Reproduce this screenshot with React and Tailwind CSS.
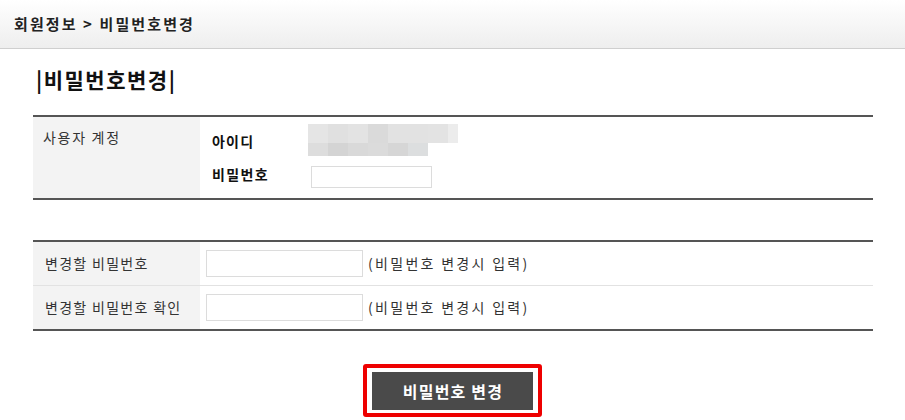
export default function App() {
  const font = { fontFamily: '"Noto Sans CJK KR", "Noto Sans", sans-serif' };
  const top = ["#e5e5e5", "#e0e0e0", "#e3e3e3", "#dadada", "#e2e2e2", "#e2e2e2", "#e3e3e3", "#ececec"];
  const bot = ["#dddddd", "#d4d4d4", "#d9d9d9", "#dbdbdb", "#d6d6d6", "#dcdedf"];
  return (
    <div className="w-[905px] h-[420px] bg-white text-[#222] overflow-hidden" style={font}>
      <div className="h-[49px] border-b border-[#cfcfcf] bg-gradient-to-b from-white to-[#eeeeee] flex items-center pl-[14px]">
        <span className="text-[15px] font-bold text-[#222] tracking-[2.1px]">회원정보 &gt; 비밀번호변경</span>
      </div>
      <div className="ml-[33px] w-[840px]">
        <div className="h-[66px] flex items-center pl-[3px] pb-[5px]">
          <h1 className="text-[21px] font-bold text-[#111] leading-none tracking-[1.5px]">|비밀번호변경|</h1>
        </div>
        <div className="border-t-2 border-b-2 border-[#555] flex h-[85px]">
          <div className="w-[167px] bg-[#f3f3f3] pl-[10px] pt-[10px] text-[14px] text-[#333] tracking-[1.7px]">사용자 계정</div>
          <div className="flex-1 relative">
            <div className="absolute left-[12px] top-[14px] text-[14px] font-bold text-[#111] tracking-[1.2px]">아이디</div>
            <div className="absolute left-[108px] top-[7px] flex flex-col">
              <div className="flex h-[19px]">
                {top.map((c, i) => (
                  <div key={i} className={i === 7 ? "w-[10px]" : "w-[20px]"} style={{ background: c }} />
                ))}
              </div>
              <div className="flex h-[13px]">
                {bot.map((c, i) => (
                  <div key={i} className="w-[20px]" style={{ background: c }} />
                ))}
              </div>
            </div>
            <div className="absolute left-[12px] top-[47px] text-[14px] font-bold text-[#111] tracking-[1.4px]">비밀번호</div>
            <div className="absolute left-[111px] top-[49px] w-[121px] h-[22px] border border-[#dcdcdc] bg-white" />
          </div>
        </div>
        <div className="h-[40px]" />
        <div className="border-t-2 border-b-2 border-[#555]">
          {["변경할 비밀번호", "변경할 비밀번호 확인"].map((label, i) => (
            <div key={i} className={i === 0 ? "flex h-[44px] border-b border-[#e2e2e2]" : "flex h-[43px]"}>
              <div className="w-[167px] bg-[#f3f3f3] pl-[12px] flex items-center text-[14px] text-[#333] tracking-[1.3px]">{label}</div>
              <div className="flex-1 flex items-center pl-[6px]">
                <div className="w-[157px] h-[27px] border border-[#dcdcdc] bg-white" />
                <span className="ml-[5px] text-[14px] text-[#333] tracking-[2.3px]">(비밀번호 변경시 입력)</span>
              </div>
            </div>
          ))}
        </div>
      </div>
      <div className="flex justify-center pt-[33px]">
        <div className="border-[4px] border-[#ee0000] rounded-[3px] pt-[4px] pb-[3px] px-[5px] bg-white">
          <button className="w-[161px] h-[38px] bg-[#4a4a4a] text-white text-[16px] font-bold tracking-[1.2px] pl-[1px]">비밀번호 변경</button>
        </div>
      </div>
    </div>
  );
}
